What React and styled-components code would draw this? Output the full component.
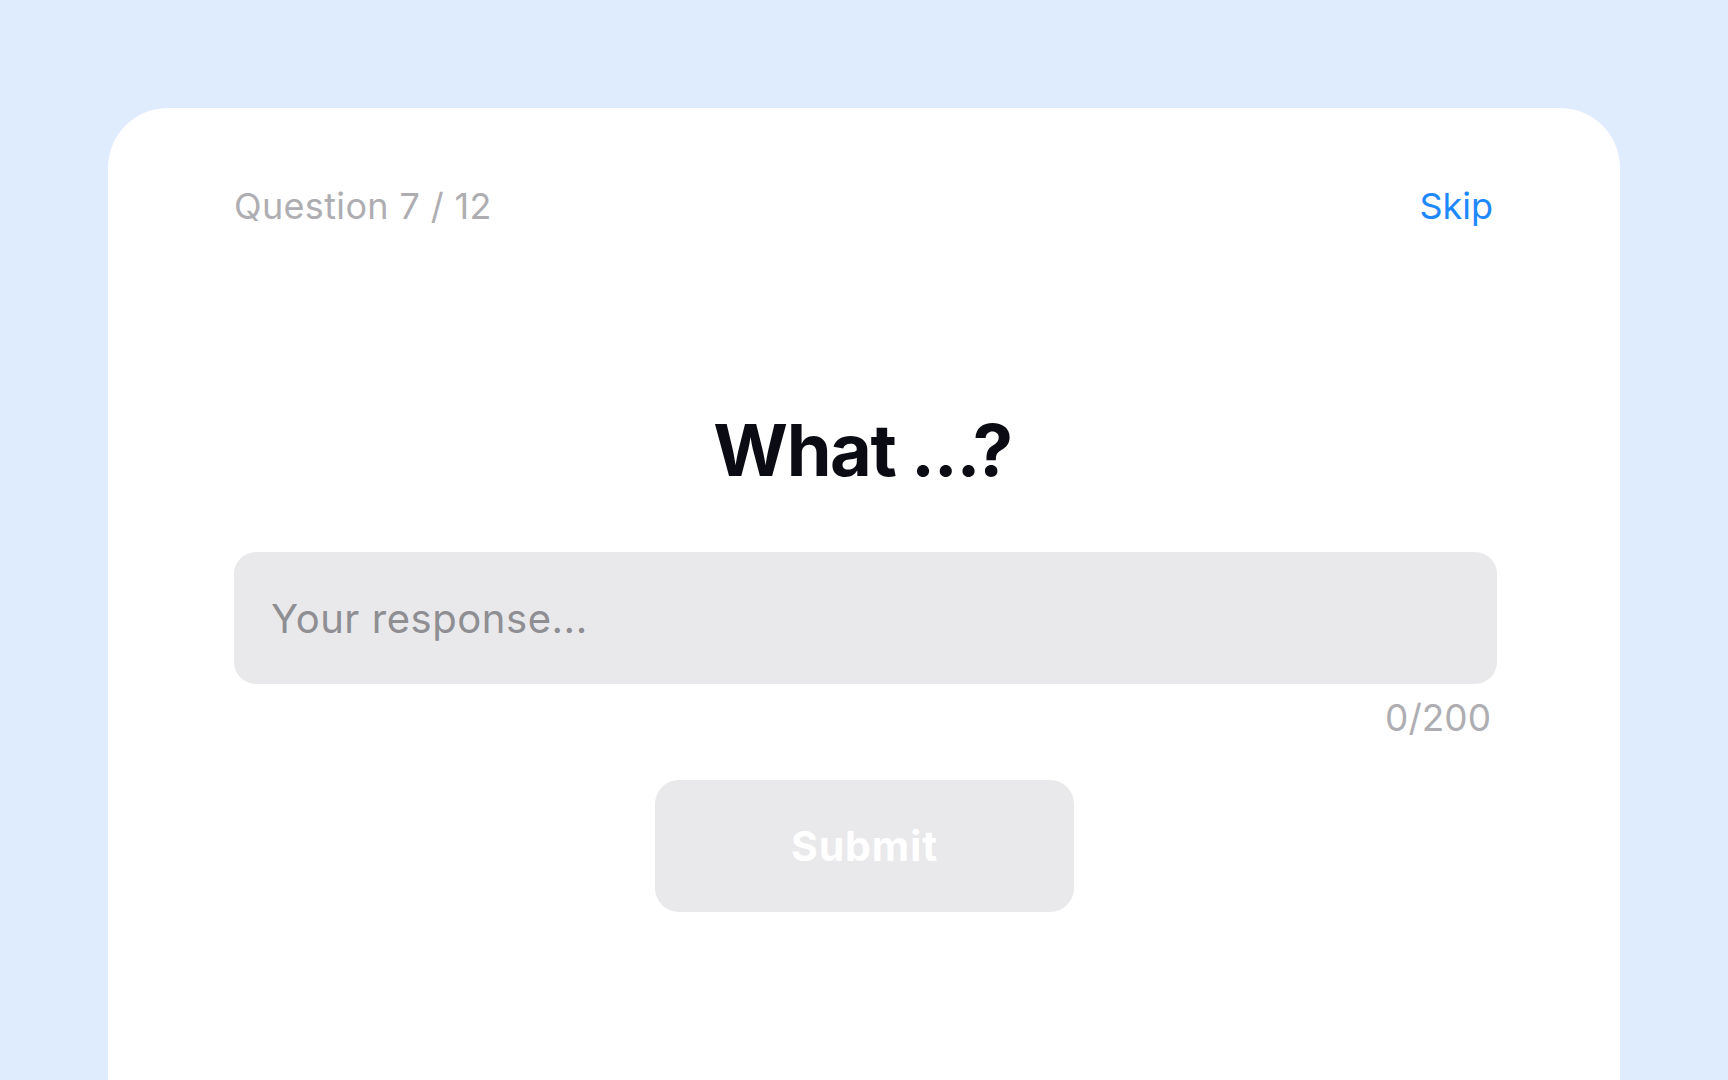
import React, { useState } from "react";
import styled, { createGlobalStyle } from "styled-components";

const GlobalStyle = createGlobalStyle`
  * { box-sizing: border-box; }
  html, body { margin: 0; padding: 0; }
  body {
    font-family: Inter, "Noto Sans", "Liberation Sans", sans-serif;
    background: #dfecfd;
    overflow: hidden;
  }
`;

const Page = styled.div`
  min-height: 100vh;
  padding: 108px 108px 0;
  background: #dfecfd;
`;

const Card = styled.main`
  background: #ffffff;
  border-radius: 60px 60px 0 0;
  min-height: calc(100vh - 108px);
  padding: 76px 123px 60px 126px;
  display: flex;
  flex-direction: column;
`;

const Header = styled.header`
  display: flex;
  justify-content: space-between;
  align-items: center;
  font-size: 36px;
  line-height: 44px;
`;

const Progress = styled.span`
  color: #aeaeb2;
  font-weight: 400;
  letter-spacing: 0.35px;
`;

const SkipButton = styled.button`
  border: none;
  background: none;
  padding: 0 4px 0 0;
  font: inherit;
  color: #1e88ff;
  cursor: pointer;
`;

const Title = styled.h1`
  margin: 178px 0 0;
  padding-right: 6px;
  text-align: center;
  font-size: 72px;
  line-height: 88px;
  font-weight: 700;
  color: #0b0b14;
  letter-spacing: -1.4px;
`;

const ResponseInput = styled.input`
  margin-top: 58px;
  width: 100%;
  height: 132px;
  border: none;
  outline: none;
  border-radius: 22px;
  background: #e9e9eb;
  padding: 0 38px 0 37px;
  font-family: inherit;
  font-size: 40px;
  letter-spacing: 0.55px;
  color: #1c1c1e;
  &::placeholder {
    color: #8e8e93;
  }
`;

const Counter = styled.div`
  margin-top: 11px;
  text-align: right;
  padding-right: 6px;
  font-size: 37px;
  line-height: 46px;
  color: #aeaeb2;
`;

const SubmitButton = styled.button`
  align-self: center;
  margin: 39px 2px 0 0;
  width: 419px;
  height: 132px;
  border: none;
  border-radius: 24px;
  background: #e9e9eb;
  color: #ffffff;
  font-family: inherit;
  font-size: 41px;
  font-weight: 700;
  letter-spacing: 0.9px;
  cursor: not-allowed;
`;

export default function App() {
  const [value, setValue] = useState("");
  const max = 200;
  return (
    <>
      <GlobalStyle />
      <Page>
        <Card>
          <Header>
            <Progress>Question 7 / 12</Progress>
            <SkipButton>Skip</SkipButton>
          </Header>
          <Title>What ...?</Title>
          <ResponseInput
            placeholder="Your response..."
            value={value}
            maxLength={max}
            onChange={(e) => setValue(e.target.value)}
          />
          <Counter>
            {value.length}/{max}
          </Counter>
          <SubmitButton disabled={value.length === 0}>Submit</SubmitButton>
        </Card>
      </Page>
    </>
  );
}
